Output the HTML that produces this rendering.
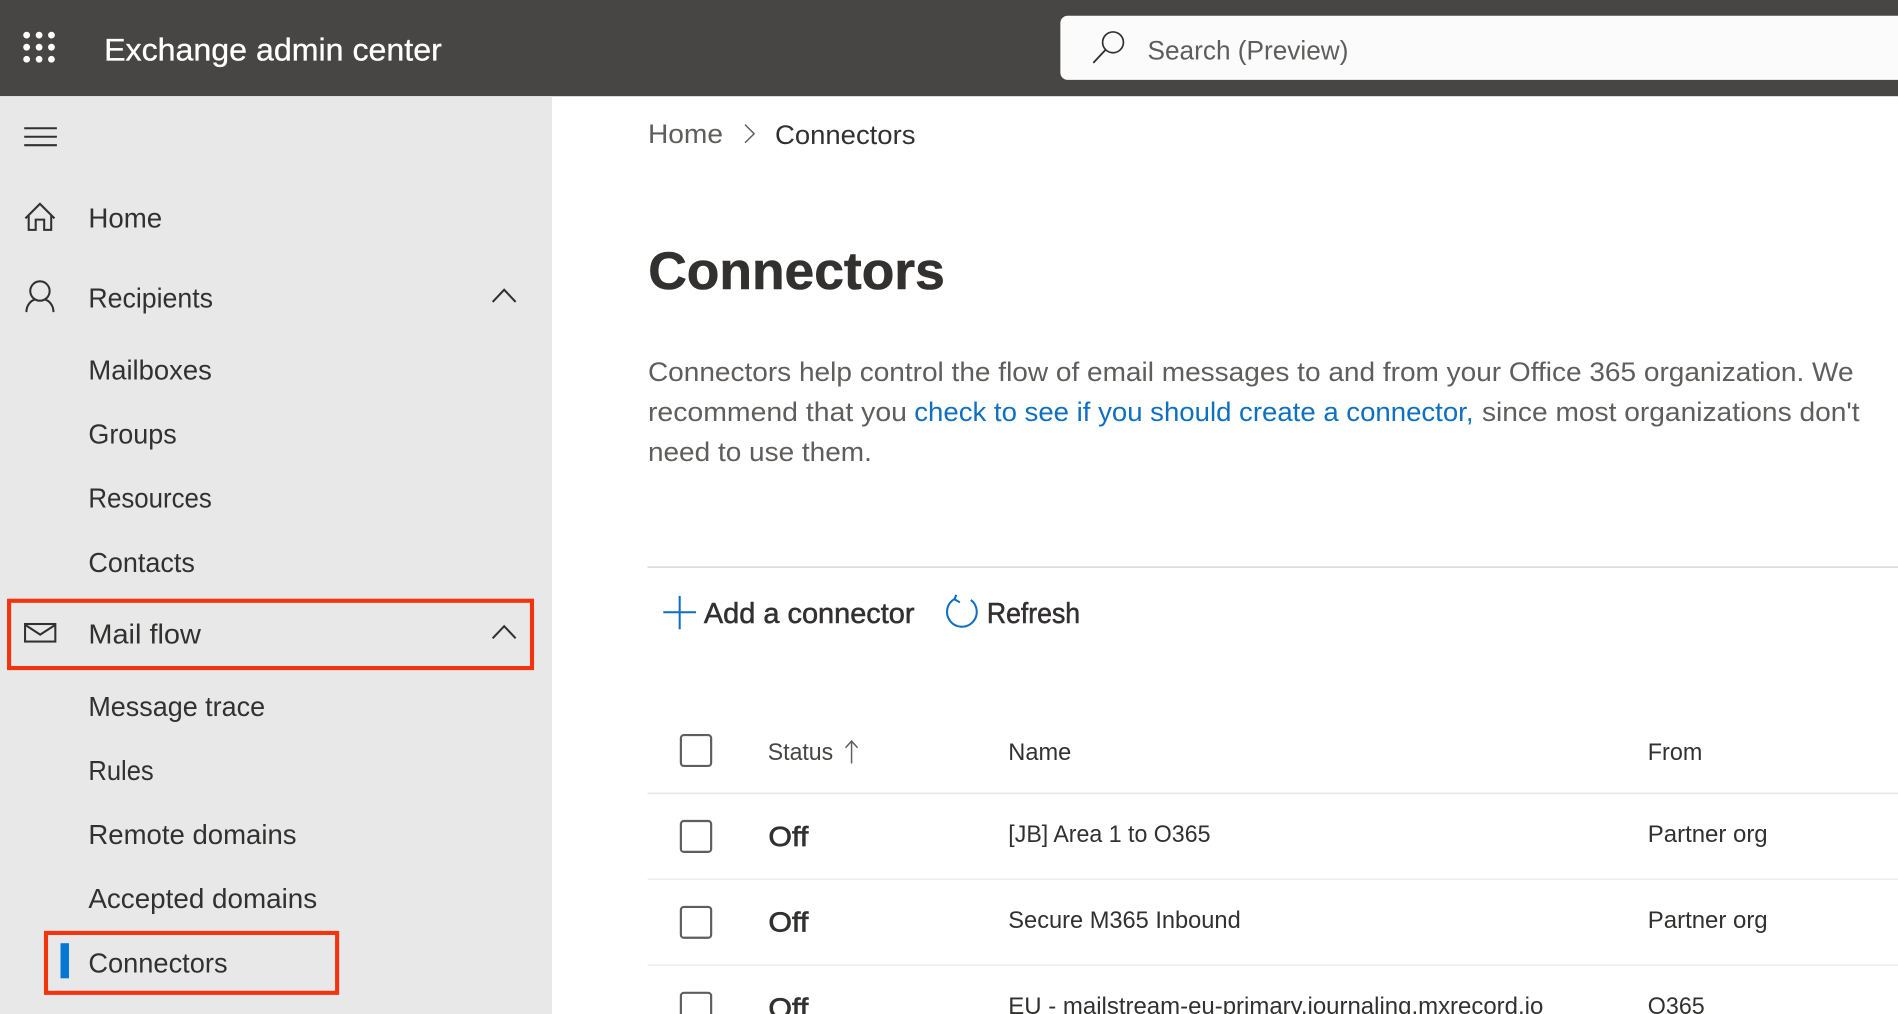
<!DOCTYPE html>
<html lang="en"><head><meta charset="utf-8"><title>Exchange admin center</title>
<style>
html,body{margin:0;padding:0;background:#fff;width:1898px;height:1014px;overflow:hidden}
svg{display:block;position:absolute;left:0;top:0}
text{font-family:"Liberation Sans",Arial,sans-serif;white-space:pre}
.n{font-size:23px;fill:#323130}
.p{font-size:22.5px;fill:#605e5c}
.t{font-size:19.5px;fill:#323130}
.o{font-size:23px;fill:#323130;stroke:#323130;stroke-width:.55px}
.a{font-size:24px;fill:#323130;stroke:#323130;stroke-width:.45px}
.i{fill:none;stroke:#323130;stroke-width:1.7}
.b{fill:#fff;stroke:#605e5c;stroke-width:1.8}
.r{fill:none;stroke:#f2330d;stroke-width:3.4}
</style></head>
<body>
<svg width="1898" height="1014" viewBox="0 0 1568 838" preserveAspectRatio="none" xmlns="http://www.w3.org/2000/svg">
<rect width="1568" height="838" fill="#fff"/>
<rect width="1568" height="79.5" fill="#484644"/>
<rect y="79.5" width="456" height="759" fill="#e8e8e8"/>

<!-- waffle -->
<g fill="#fff">
<circle cx="22" cy="29" r="2.8"/><circle cx="32.3" cy="29" r="2.8"/><circle cx="42.5" cy="29" r="2.8"/>
<circle cx="22" cy="39" r="2.8"/><circle cx="32.3" cy="39" r="2.8"/><circle cx="42.5" cy="39" r="2.8"/>
<circle cx="22" cy="49" r="2.8"/><circle cx="32.3" cy="49" r="2.8"/><circle cx="42.5" cy="49" r="2.8"/>
</g>
<text x="86" y="50" font-size="26" fill="#fff" stroke="#fff" stroke-width=".25" textLength="279" lengthAdjust="spacingAndGlyphs">Exchange admin center</text>

<!-- search -->
<path d="M1568 13H882a6 6 0 0 0-6 6V60a6 6 0 0 0 6 6H1568Z" fill="#fbfbfb"/>
<circle cx="919.5" cy="35" r="8.6" fill="none" stroke="#323130" stroke-width="1.4"/>
<path d="M913.3 41.2L903.2 52" fill="none" stroke="#323130" stroke-width="1.5"/>
<text x="948" y="49" font-size="22.5" fill="#605e5c" textLength="166" lengthAdjust="spacingAndGlyphs">Search (Preview)</text>

<!-- nav icons -->
<path d="M20 106H47M20 113H47M20 120H47" class="i"/>
<path d="M21 180.5L33 168.5L45 180.5M23.7 178V190H29.5V181.5H36.5V190H42.3V178" class="i"/>
<circle cx="33" cy="240.5" r="8" class="i"/>
<path d="M21.8 258C21.8 252 25.5 248.5 28.8 247.5M37.2 247.5C40.5 248.5 44.2 252 44.2 258" class="i"/>
<path d="M407 249.5L416.5 239.5L426 249.5" class="i"/>
<path d="M407 527.5L416.5 517.5L426 527.5" class="i"/>
<rect x="20.7" y="515.7" width="25" height="14.5" class="i"/>
<path d="M21 516.5L33.2 524.5L45.5 516.5" class="i"/>

<!-- nav text -->
<text class="n" x="73" y="188" textLength="61" lengthAdjust="spacingAndGlyphs">Home</text>
<text class="n" x="73" y="254" textLength="103" lengthAdjust="spacingAndGlyphs">Recipients</text>
<text class="n" x="73" y="313.6" textLength="102" lengthAdjust="spacingAndGlyphs">Mailboxes</text>
<text class="n" x="73" y="366.6" textLength="73" lengthAdjust="spacingAndGlyphs">Groups</text>
<text class="n" x="73" y="419.6" textLength="102" lengthAdjust="spacingAndGlyphs">Resources</text>
<text class="n" x="73" y="472.6" textLength="88" lengthAdjust="spacingAndGlyphs">Contacts</text>
<text class="n" x="73" y="532" textLength="93" lengthAdjust="spacingAndGlyphs">Mail flow</text>
<text class="n" x="73" y="591.6" textLength="146" lengthAdjust="spacingAndGlyphs">Message trace</text>
<text class="n" x="73" y="644.6" textLength="54" lengthAdjust="spacingAndGlyphs">Rules</text>
<text class="n" x="73" y="697.6" textLength="172" lengthAdjust="spacingAndGlyphs">Remote domains</text>
<text class="n" x="73" y="750.6" textLength="189" lengthAdjust="spacingAndGlyphs">Accepted domains</text>
<text class="n" x="73" y="803.6" textLength="115" lengthAdjust="spacingAndGlyphs">Connectors</text>

<rect x="50" y="779.5" width="7" height="29" fill="#0078d4"/>
<rect x="7.5" y="496.5" width="432" height="55.6" class="r"/>
<rect x="38" y="771" width="240.5" height="49.5" class="r"/>

<!-- breadcrumb -->
<text x="535.3" y="118" font-size="22.5" fill="#605e5c" textLength="62" lengthAdjust="spacingAndGlyphs">Home</text>
<path d="M615.5 103L623 110.5L615.5 118" fill="none" stroke="#605e5c" stroke-width="1.2"/>
<text x="640.3" y="119" font-size="22.5" fill="#323130" textLength="116" lengthAdjust="spacingAndGlyphs">Connectors</text>

<!-- title -->
<text x="535.5" y="239" font-size="44" font-weight="700" fill="#323130" stroke="#323130" stroke-width=".5" textLength="245" lengthAdjust="spacingAndGlyphs">Connectors</text>

<!-- paragraph -->
<text class="p" x="535.3" y="315" textLength="996" lengthAdjust="spacingAndGlyphs">Connectors help control the flow of email messages to and from your Office 365 organization. We</text>
<text class="p" x="535.3" y="348" textLength="214" lengthAdjust="spacingAndGlyphs">recommend that you</text>
<text x="755.3" y="348" font-size="22.5" fill="#0f6fc0" textLength="462" lengthAdjust="spacingAndGlyphs">check to see if you should create a connector,</text>
<text class="p" x="1224.3" y="348" textLength="312" lengthAdjust="spacingAndGlyphs">since most organizations don't</text>
<text class="p" x="535.3" y="381" textLength="185" lengthAdjust="spacingAndGlyphs">need to use them.</text>

<rect x="535" y="468" width="1033" height="1.4" fill="#dedddc"/>

<!-- toolbar -->
<path d="M548 506H575M561.5 492.5V520" fill="none" stroke="#0f6fc0" stroke-width="1.7"/>
<text class="a" x="581.5" y="515" textLength="174" lengthAdjust="spacingAndGlyphs">Add a connector</text>
<path d="M788.5 495A12.3 12.3 0 1 0 802 495.8" fill="none" stroke="#0f6fc0" stroke-width="1.7"/>
<path d="M790 491.5L788.5 495.2L793 497.8" fill="none" stroke="#0f6fc0" stroke-width="1.7"/>
<text class="a" x="815.3" y="515" textLength="77" lengthAdjust="spacingAndGlyphs">Refresh</text>

<!-- table -->
<rect x="562.5" y="607.5" width="25" height="25.5" rx="2.5" class="b"/>
<text class="t" x="634.3" y="628" style="fill:#484644" textLength="54" lengthAdjust="spacingAndGlyphs">Status</text>
<path d="M703.5 631V613M698.5 618L703.5 612.5L708.5 618" fill="none" stroke="#605e5c" stroke-width="1.2"/>
<text class="t" x="833" y="628" textLength="52" lengthAdjust="spacingAndGlyphs">Name</text>
<text class="t" x="1361.3" y="628" textLength="45" lengthAdjust="spacingAndGlyphs">From</text>
<rect x="535" y="655" width="1033" height="1.3" fill="#e8e7e6"/>

<rect x="562.5" y="678.5" width="25" height="25.5" rx="2.5" class="b"/>
<text class="o" x="634.8" y="699" textLength="33" lengthAdjust="spacingAndGlyphs">Off</text>
<text class="t" x="833" y="696" textLength="167" lengthAdjust="spacingAndGlyphs">[JB] Area 1 to O365</text>
<text class="t" x="1361.3" y="696" textLength="99" lengthAdjust="spacingAndGlyphs">Partner org</text>
<rect x="535" y="726" width="1033" height="1.3" fill="#eeedec"/>

<rect x="562.5" y="749.5" width="25" height="25.5" rx="2.5" class="b"/>
<text class="o" x="634.8" y="770" textLength="33" lengthAdjust="spacingAndGlyphs">Off</text>
<text class="t" x="833" y="767" textLength="192" lengthAdjust="spacingAndGlyphs">Secure M365 Inbound</text>
<text class="t" x="1361.3" y="767" textLength="99" lengthAdjust="spacingAndGlyphs">Partner org</text>
<rect x="535" y="797" width="1033" height="1.3" fill="#eeedec"/>

<rect x="562.5" y="820.5" width="25" height="25.5" rx="2.5" class="b"/>
<text class="o" x="634.8" y="841" textLength="33" lengthAdjust="spacingAndGlyphs">Off</text>
<text class="t" x="833" y="838" textLength="442" lengthAdjust="spacingAndGlyphs">EU - mailstream-eu-primary.journaling.mxrecord.io</text>
<text class="t" x="1361.3" y="838" textLength="47" lengthAdjust="spacingAndGlyphs">O365</text>
</svg>
</body></html>
